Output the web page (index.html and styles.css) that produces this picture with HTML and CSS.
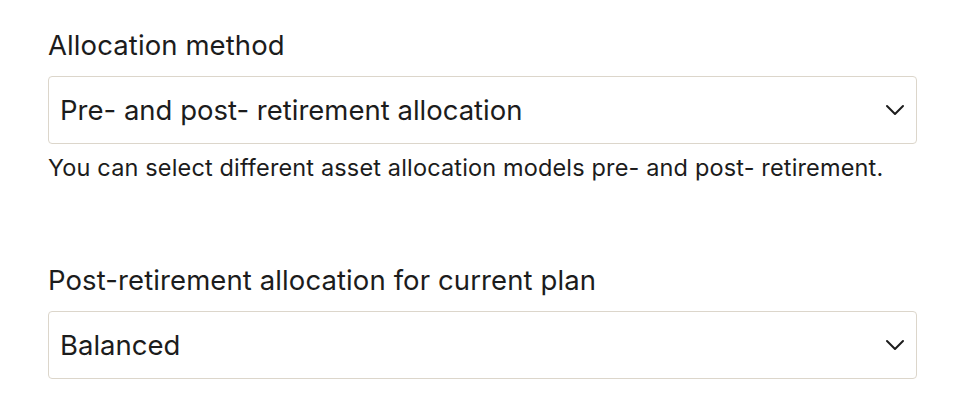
FILE: index.html
```html
<!DOCTYPE html>
<html lang="en">
<head>
    <meta charset="UTF-8">
    <meta name="viewport" content="width=device-width, initial-scale=1.0">
    <title>Allocation settings</title>
    <link rel="stylesheet" href="styles.css">
</head>
<body>
<div class="form">
    <div class="field">
        <label class="field-label">Allocation method</label>
        <div class="select">
            <span class="select-value">Pre- and post- retirement allocation</span>
            <svg class="chevron" width="20" height="12" viewBox="0 0 20 12" fill="none">
                <path d="M2 2l8 8 8-8" stroke="#1c1c1c" stroke-width="2" stroke-linecap="round" stroke-linejoin="round"/>
            </svg>
        </div>
        <p class="field-help">You can select different asset allocation models pre- and post- retirement.</p>
    </div>
    <div class="field">
        <label class="field-label">Post-retirement allocation for current plan</label>
        <div class="select">
            <span class="select-value">Balanced</span>
            <svg class="chevron" width="20" height="12" viewBox="0 0 20 12" fill="none">
                <path d="M2 2l8 8 8-8" stroke="#1c1c1c" stroke-width="2" stroke-linecap="round" stroke-linejoin="round"/>
            </svg>
        </div>
    </div>
</div>
</body>
</html>
```

FILE: styles.css
```css
body {
    margin: 0;
    background: #fff;
    font-family: Inter, "Noto Sans", sans-serif;
    color: #1c1c1c;
}

.form {
    width: 869px;
    padding: 28px 0 0 48px;
    display: flex;
    flex-direction: column;
    gap: 81px;
}

.field {
    display: flex;
    flex-direction: column;
}

.field-label {
    font-size: 27.5px;
    line-height: 34px;
    margin-bottom: 14px;
    letter-spacing: 0.1px;
}

.select {
    height: 68px;
    box-sizing: border-box;
    border: 1px solid #dcd6cb;
    border-radius: 4px;
    display: flex;
    align-items: center;
    justify-content: space-between;
    padding: 0 11px;
}

.select-value {
    font-size: 27.5px;
}

.chevron {
    display: block;
}

.field-help {
    margin: 10px 0 0;
    font-size: 23.5px;
    line-height: 28px;
    letter-spacing: 0.15px;
}
```
